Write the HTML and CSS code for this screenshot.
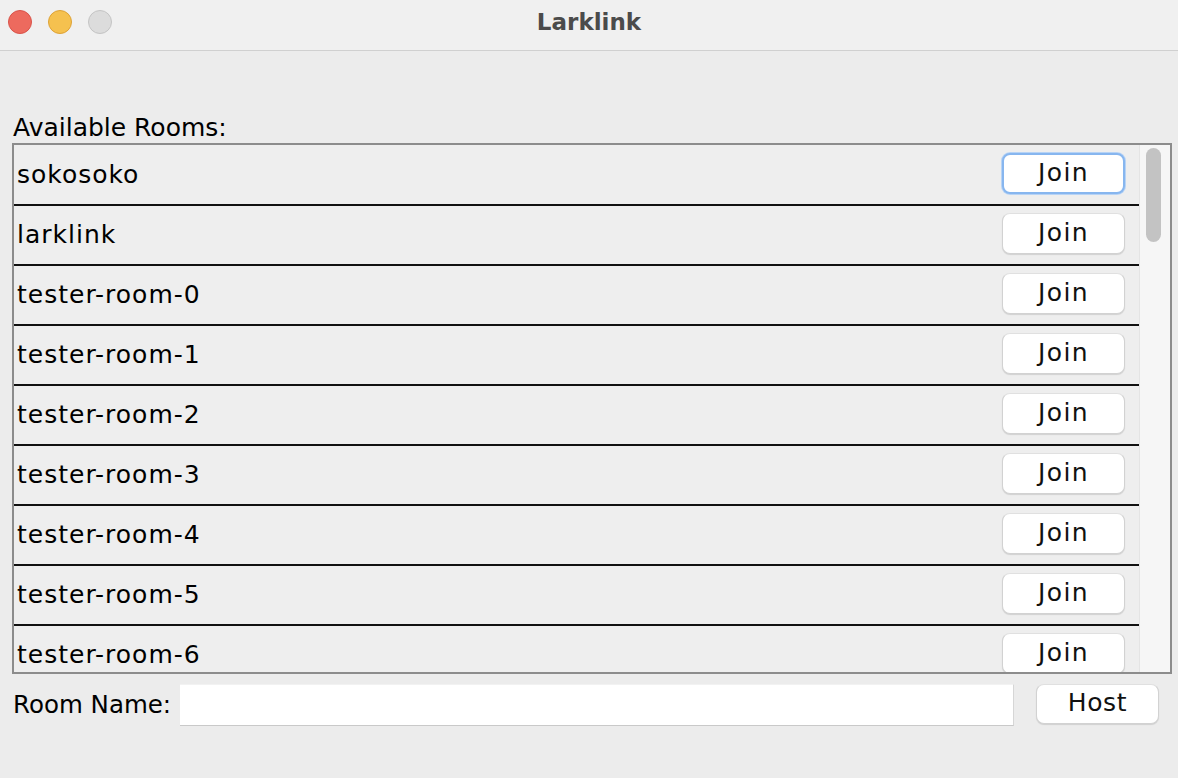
FILE: index.html
```html
<!DOCTYPE html>
<html>
<head>
<meta charset="utf-8">
<title>Larklink</title>
<link rel="stylesheet" href="styles.css">
</head>
<body>
<div class="window">
  <div class="titlebar">
    <div class="lights">
      <span class="light red"></span>
      <span class="light yellow"></span>
      <span class="light gray"></span>
    </div>
    <div class="title">Larklink</div>
  </div>
  <div class="content">
    <div class="label">Available Rooms:</div>
    <div class="list">
      <div class="rows">
        <div class="row"><span class="name">sokosoko</span><button class="btn focused">Join</button></div>
        <div class="row"><span class="name">larklink</span><button class="btn">Join</button></div>
        <div class="row"><span class="name">tester-room-0</span><button class="btn">Join</button></div>
        <div class="row"><span class="name">tester-room-1</span><button class="btn">Join</button></div>
        <div class="row"><span class="name">tester-room-2</span><button class="btn">Join</button></div>
        <div class="row"><span class="name">tester-room-3</span><button class="btn">Join</button></div>
        <div class="row"><span class="name">tester-room-4</span><button class="btn">Join</button></div>
        <div class="row"><span class="name">tester-room-5</span><button class="btn">Join</button></div>
        <div class="row"><span class="name">tester-room-6</span><button class="btn">Join</button></div>
      </div>
      <div class="scrollbar"><div class="thumb"></div></div>
    </div>
    <div class="bottom">
      <span class="field-label">Room Name:</span>
      <input class="field" type="text" aria-label="Room Name">
      <button class="btn host">Host</button>
    </div>
  </div>
</div>
</body>
</html>
```
FILE: styles.css
```css
html, body {
  margin: 0;
  padding: 0;
}
body {
  width: 1178px;
  height: 778px;
  overflow: hidden;
  background: #ececec;
  font-family: "DejaVu Sans", "Noto Sans", sans-serif;
  color: #000;
}
.window {
  width: 1178px;
  height: 778px;
  display: flex;
  flex-direction: column;
}
.titlebar {
  height: 50px;
  background: #f0f0f0;
  border-bottom: 1px solid #d0d0d0;
  position: relative;
  display: flex;
  align-items: center;
  justify-content: center;
  flex-shrink: 0;
}
.lights {
  position: absolute;
  left: 8px;
  top: 10px;
  display: flex;
  gap: 16px;
}
.light {
  width: 22px;
  height: 22px;
  border-radius: 50%;
  display: block;
  border: 1px solid transparent;
}
.red { background: #ed6a5e; border-color: #d9534a; }
.yellow { background: #f5c14f; border-color: #dea236; }
.gray { background: #dcdcdc; border-color: #c4c4c4; }
.title {
  font-family: "DejaVu Sans", sans-serif;
  font-weight: bold;
  font-size: 23px;
  color: #4b4b4b;
  margin-top: -7px;
}
.content {
  padding: 0 6px 0 12px;
  display: flex;
  flex-direction: column;
}
.label {
  margin-top: 62px;
  height: 30px;
  line-height: 30px;
  font-size: 25px;
  padding-left: 1px;
}
.list {
  height: 527px;
  border: 2px solid #8c8c8c;
  display: flex;
  overflow: hidden;
  background: #eeeeee;
}
.rows {
  flex: 1;
  overflow: hidden;
  padding-top: 1px;
}
.row {
  height: 58px;
  border-bottom: 2px solid #111;
  display: flex;
  align-items: flex-start;
  justify-content: space-between;
  padding-left: 3px;
  padding-right: 14px;
}
.name {
  font-size: 25px;
  line-height: 58px;
  letter-spacing: 1px;
  white-space: nowrap;
}
.btn {
  width: 123px;
  height: 41px;
  margin-top: 7px;
  background: #fff;
  border: 1px solid #d2d2d2;
  border-top-color: #e0e0e0;
  border-radius: 8px;
  box-shadow: 0 1px 1px rgba(0,0,0,0.12);
  font-family: "DejaVu Sans", sans-serif;
  font-size: 25px;
  line-height: 30px;
  color: #111;
  padding: 0 0 2px 0;
  letter-spacing: 1.4px;
  flex-shrink: 0;
}
.btn.focused {
  border: 2px solid #87b6ef;
  box-shadow: 0 0 0 1px #b7d3f5;
}
.scrollbar {
  width: 31px;
  flex-shrink: 0;
  background: #f6f6f6;
  border-left: 1px solid #e4e4e4;
  box-sizing: border-box;
  padding: 3px 0 0 6px;
}
.thumb {
  width: 15px;
  height: 94px;
  border-radius: 8px;
  background: #c3c3c3;
}
.bottom {
  margin-top: 10px;
  display: flex;
  align-items: flex-start;
}
.field-label {
  font-size: 24.5px;
  line-height: 42px;
  padding-left: 1px;
  width: 167px;
  flex-shrink: 0;
  white-space: nowrap;
}
.field {
  width: 834px;
  height: 42px;
  flex-shrink: 0;
  box-sizing: border-box;
  border: none;
  border-right: 1px solid #d6d6d6;
  border-bottom: 1px solid #c9c9c9;
  border-top: 1px solid #f2f2f2;
  background: #fff;
  margin: 0;
}
.btn.host {
  margin-top: 0;
  margin-left: 22px;
  height: 40px;
  letter-spacing: 0.6px;
}
```
